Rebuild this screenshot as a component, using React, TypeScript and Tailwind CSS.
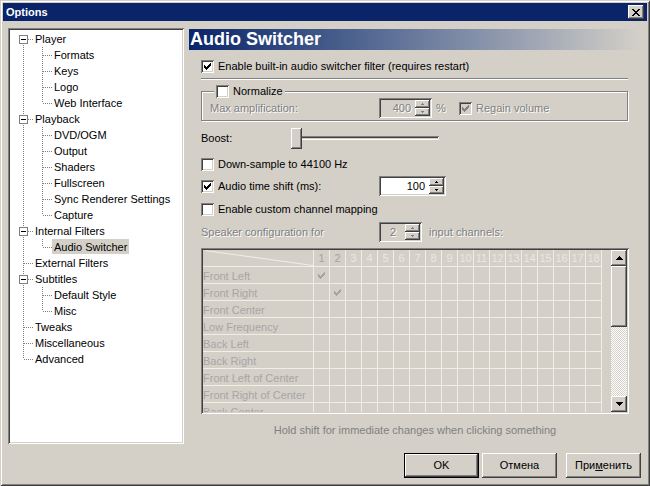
import React from 'react';

const RAISED =
  'bg-[#d4d0c8] shadow-[inset_-1px_-1px_0_#404040,inset_1px_1px_0_#ffffff,inset_-2px_-2px_0_#808080]';
const SUNKEN =
  'shadow-[inset_1px_1px_0_#808080,inset_-1px_-1px_0_#ffffff,inset_2px_2px_0_#404040,inset_-2px_-2px_0_#d4d0c8]';
const GRAYTEXT = 'text-[#808080] [text-shadow:1px_1px_0_#ffffff]';

type Node = { label: string; level: 0 | 1; box?: boolean; last?: boolean; selected?: boolean };

const tree: Node[] = [
  { label: 'Player', level: 0, box: true },
  { label: 'Formats', level: 1 },
  { label: 'Keys', level: 1 },
  { label: 'Logo', level: 1 },
  { label: 'Web Interface', level: 1, last: true },
  { label: 'Playback', level: 0, box: true },
  { label: 'DVD/OGM', level: 1 },
  { label: 'Output', level: 1 },
  { label: 'Shaders', level: 1 },
  { label: 'Fullscreen', level: 1 },
  { label: 'Sync Renderer Settings', level: 1 },
  { label: 'Capture', level: 1, last: true },
  { label: 'Internal Filters', level: 0, box: true },
  { label: 'Audio Switcher', level: 1, last: true, selected: true },
  { label: 'External Filters', level: 0 },
  { label: 'Subtitles', level: 0, box: true },
  { label: 'Default Style', level: 1 },
  { label: 'Misc', level: 1, last: true },
  { label: 'Tweaks', level: 0 },
  { label: 'Miscellaneous', level: 0 },
  { label: 'Advanced', level: 0, last: true },
];

const speakers = [
  'Front Left',
  'Front Right',
  'Front Center',
  'Low Frequency',
  'Back Left',
  'Back Right',
  'Front Left of Center',
  'Front Right of Center',
  'Back Center',
];

function CheckMark({ color }: { color: string }) {
  // classic 7x7 tick, three pixels per column
  const tops = [2, 3, 4, 3, 2, 1, 0];
  return (
    <svg width="7" height="7" viewBox="0 0 7 7" shapeRendering="crispEdges" className="shrink-0">
      {tops.map((t, i) => (
        <rect key={i} x={i} y={t} width="1" height="3" fill={color} />
      ))}
    </svg>
  );
}

function Tri({ h, dir, color }: { h: number; dir: 'up' | 'down'; color: string }) {
  const w = 2 * h - 1;
  return (
    <svg width={w} height={h} shapeRendering="crispEdges" className="shrink-0">
      {Array.from({ length: h }, (_, r) => (
        <rect
          key={r}
          x={h - 1 - r}
          y={dir === 'up' ? r : h - 1 - r}
          width={1 + 2 * r}
          height="1"
          fill={color}
        />
      ))}
    </svg>
  );
}

function Checkbox({ checked, disabled }: { checked?: boolean; disabled?: boolean }) {
  return (
    <div
      className={`w-[13px] h-[13px] shrink-0 flex items-center justify-center ${
        disabled ? 'bg-[#d4d0c8]' : 'bg-white'
      } ${SUNKEN}`}
    >
      {checked && <CheckMark color={disabled ? '#808080' : '#000000'} />}
    </div>
  );
}

function Spinner({
  width,
  value,
  disabled,
  center,
}: {
  width: string;
  value: string;
  disabled?: boolean;
  center?: boolean;
}) {
  const arrow = disabled ? '#808080' : '#000000';
  return (
    <div className={`${width} h-[20px] p-[2px] flex shrink-0 ${disabled ? 'bg-[#d4d0c8]' : 'bg-white'} ${SUNKEN}`}>
      <div
        className={`flex-1 flex items-center ${center ? 'justify-center' : 'justify-end pr-[4px]'} ${
          disabled ? GRAYTEXT : 'text-black'
        }`}
      >
        {value}
      </div>
      <div className="w-[15px] flex flex-col">
        <div className={`h-[8px] flex items-center justify-center ${RAISED}`}>
          <Tri h={2} dir="up" color={arrow} />
        </div>
        <div className={`h-[8px] flex items-center justify-center ${RAISED}`}>
          <Tri h={2} dir="down" color={arrow} />
        </div>
      </div>
    </div>
  );
}

function TreeLines({ node, first }: { node: Node; first: boolean }) {
  const dot = { stroke: '#808080', strokeWidth: 1, strokeDasharray: '1 1' };
  if (node.level === 0) {
    return (
      <svg width="23" height="16" className="shrink-0" shapeRendering="crispEdges">
        <line x1="13.5" y1={first ? 8 : 0} x2="13.5" y2={node.last ? 8 : 16} {...dot} />
        <line x1="14" y1="8.5" x2="23" y2="8.5" {...dot} />
        {node.box && (
          <>
            <rect x="9.5" y="4.5" width="8" height="8" fill="#ffffff" stroke="#808080" />
            <rect x="11" y="8" width="5" height="1" fill="#000000" />
          </>
        )}
      </svg>
    );
  }
  return (
    <svg width="42" height="16" className="shrink-0" shapeRendering="crispEdges">
      <line x1="13.5" y1="0" x2="13.5" y2="16" {...dot} />
      <line x1="32.5" y1="0" x2="32.5" y2={node.last ? 8 : 16} {...dot} />
      <line x1="33" y1="8.5" x2="42" y2="8.5" {...dot} />
    </svg>
  );
}

function Tree() {
  return (
    <div className={`w-[176px] h-[416px] bg-white pt-[3px] px-[2px] shrink-0 ${SUNKEN}`}>
      {tree.map((n, i) => (
        <div key={n.label} className="flex h-[16px] items-start">
          <TreeLines node={n} first={i === 0} />
          <span
            className={`px-[2px] h-[15px] leading-[17px] whitespace-nowrap ${n.selected ? 'bg-[#d4d0c8]' : ''}`}
          >
            {n.label}
          </span>
        </div>
      ))}
    </div>
  );
}

function TitleBar() {
  return (
    <div className="h-[18px] bg-[#0a246a] flex items-center justify-between pl-[3px] pr-[3px] shrink-0">
      <span className="text-white font-bold leading-[14px]">Options</span>
      <div className={`w-[16px] h-[14px] flex items-center justify-center ${RAISED}`}>
        <svg width="8" height="7" shapeRendering="crispEdges">
          {Array.from({ length: 7 }, (_, r) => {
            const a = Math.min(r, 6 - r);
            return (
              <React.Fragment key={r}>
                <rect x={a} y={r} width="2" height="1" fill="#000000" />
                <rect x={6 - a} y={r} width="2" height="1" fill="#000000" />
              </React.Fragment>
            );
          })}
        </svg>
      </div>
    </div>
  );
}

function Slider() {
  return (
    <div className="relative w-[148px] h-[21px]">
      <div className={`absolute left-0 right-0 top-[8px] h-[4px] bg-[#d4d0c8] ${SUNKEN}`} />
      <div className={`absolute left-0 top-0 w-[11px] h-[21px] ${RAISED}`} />
    </div>
  );
}

function Grid() {
  const cols = Array.from({ length: 18 }, (_, i) => i + 1);
  return (
    <div className={`ml-[12px] mt-[6px] w-[428px] h-[166px] p-[2px] flex shrink-0 ${SUNKEN}`}>
      <div className="w-[408px] h-[162px] overflow-hidden flex flex-col">
        <div className="flex h-[17px] shrink-0">
          <div className="w-[111px] h-[17px] border-r border-b border-[#efeee9]">
            <svg width="110" height="16">
              <line x1="2" y1="0.5" x2="110" y2="15.5" stroke="#efeee9" />
            </svg>
          </div>
          {cols.map((c) => (
            <div
              key={c}
              className={`w-[16px] h-[17px] border-r border-b border-[#efeee9] flex items-center justify-center pt-[1px] ${
                c <= 2 ? 'text-[#a4a4a4]' : 'text-[#e9e8e3]'
              }`}
            >
              {c}
            </div>
          ))}
        </div>
        {speakers.map((s, r) => (
          <div key={s} className="flex h-[17px] shrink-0">
            <div className="w-[111px] h-[17px] border-r border-b border-[#efeee9] leading-[18px] text-[#a6a6a6] whitespace-nowrap">
              {s}
            </div>
            {cols.map((c) => (
              <div
                key={c}
                className="w-[16px] h-[17px] border-r border-b border-[#efeee9] flex items-center justify-center"
              >
                {c === r + 1 && r < 2 && <CheckMark color="#a4a4a4" />}
              </div>
            ))}
          </div>
        ))}
      </div>
      <div className="w-[16px] flex flex-col">
        <div className={`h-[16px] flex items-center justify-center ${RAISED}`}>
          <Tri h={4} dir="up" color="#000000" />
        </div>
        <div className={`h-[61px] ${RAISED}`} />
        <div className="h-[69px] [background-image:repeating-conic-gradient(#ffffff_0_25%,#d4d0c8_0_50%)] [background-size:2px_2px]" />
        <div className={`h-[16px] flex items-center justify-center ${RAISED}`}>
          <Tri h={4} dir="down" color="#000000" />
        </div>
      </div>
    </div>
  );
}

function RightPanel() {
  return (
    <div className="ml-[5px] w-[452px] flex flex-col">
      <div className="mt-[1px] h-[21px] shrink-0 bg-linear-to-r from-[#0a246a] to-[#d4d0c8] flex items-center pl-[1px]">
        <span className="text-white font-bold text-[18px] leading-[21px]">Audio Switcher</span>
      </div>

      <div className="mt-[8px] h-[17px] flex items-center gap-[4px] pl-[12px] shrink-0">
        <Checkbox checked />
        <span>Enable built-in audio switcher filter (requires restart)</span>
      </div>

      <div className="mt-[3px] ml-[12px] w-[427px] h-[2px] border-t border-b border-t-[#808080] border-b-white shrink-0" />

      <fieldset className="mt-[5px] ml-[12px] w-[427px] border border-[#808080] shadow-[1px_1px_0_#ffffff,inset_1px_1px_0_#ffffff] pb-[2px] shrink-0">
        <legend className="ml-[12px] px-[2px] bg-[#d4d0c8]">
          <div className="h-[13px] flex items-center gap-[4px]">
            <Checkbox />
            <span>Normalize</span>
          </div>
        </legend>
        <div className="h-[20px] flex items-center pl-[8px]">
          <span className={`w-[169px] ${GRAYTEXT}`}>Max amplification:</span>
          <Spinner width="w-[53px]" value="400" disabled />
          <span className={`w-[27px] pl-[4px] ${GRAYTEXT}`}>%</span>
          <div className="flex items-center gap-[4px]">
            <Checkbox checked disabled />
            <span className={GRAYTEXT}>Regain volume</span>
          </div>
        </div>
      </fieldset>

      <div className="mt-[7px] h-[21px] flex items-center pl-[12px] shrink-0">
        <span className="w-[90px]">Boost:</span>
        <Slider />
      </div>

      <div className="mt-[7px] h-[17px] flex items-center gap-[4px] pl-[12px] shrink-0">
        <Checkbox />
        <span>Down-sample to 44100 Hz</span>
      </div>

      <div className="mt-[3px] h-[20px] flex items-center pl-[12px] shrink-0">
        <div className="w-[178px] flex items-center gap-[4px]">
          <Checkbox checked />
          <span>Audio time shift (ms):</span>
        </div>
        <Spinner width="w-[67px]" value="100" />
      </div>

      <div className="mt-[5px] h-[17px] flex items-center gap-[4px] pl-[12px] shrink-0">
        <Checkbox />
        <span>Enable custom channel mapping</span>
      </div>

      <div className="mt-[4px] h-[20px] flex items-center pl-[12px] shrink-0">
        <span className={`w-[178px] ${GRAYTEXT}`}>Speaker configuration for</span>
        <Spinner width="w-[43px]" value="2" disabled center />
        <span className={`ml-[7px] ${GRAYTEXT}`}>input channels:</span>
      </div>

      <Grid />

      <div className="mt-[8px] h-[16px] ml-[12px] w-[428px] flex items-center justify-center text-[#808080] shrink-0">
        Hold shift for immediate changes when clicking something
      </div>
    </div>
  );
}

function Btn({ children, def, cls }: { children: React.ReactNode; def?: boolean; cls?: string }) {
  if (def) {
    return (
      <div className={`w-[75px] h-[25px] border border-black ${cls ?? ''}`}>
        <div className={`w-full h-full flex items-center justify-center ${RAISED}`}>{children}</div>
      </div>
    );
  }
  return (
    <div className={`w-[75px] h-[25px] flex items-center justify-center ${RAISED} ${cls ?? ''}`}>{children}</div>
  );
}

export default function App() {
  return (
    <div className="w-[650px] h-[486px] bg-[#d4d0c8] p-[3px] flex flex-col font-['Liberation_Sans',Arial,sans-serif] text-[11px] leading-[13px] text-black select-none overflow-hidden shadow-[inset_1px_1px_0_#d4d0c8,inset_-1px_-1px_0_#404040,inset_2px_2px_0_#ffffff,inset_-2px_-2px_0_#808080]">
      <TitleBar />
      <div className="flex mt-[7px] ml-[5px] h-[416px] shrink-0">
        <Tree />
        <RightPanel />
      </div>
      <div className="flex justify-end mt-[9px] pr-[6px]">
        <Btn def>OK</Btn>
        <Btn cls="ml-[3px]">Отмена</Btn>
        <Btn cls="ml-[9px]">
          При<span className="underline">м</span>енить
        </Btn>
      </div>
    </div>
  );
}
